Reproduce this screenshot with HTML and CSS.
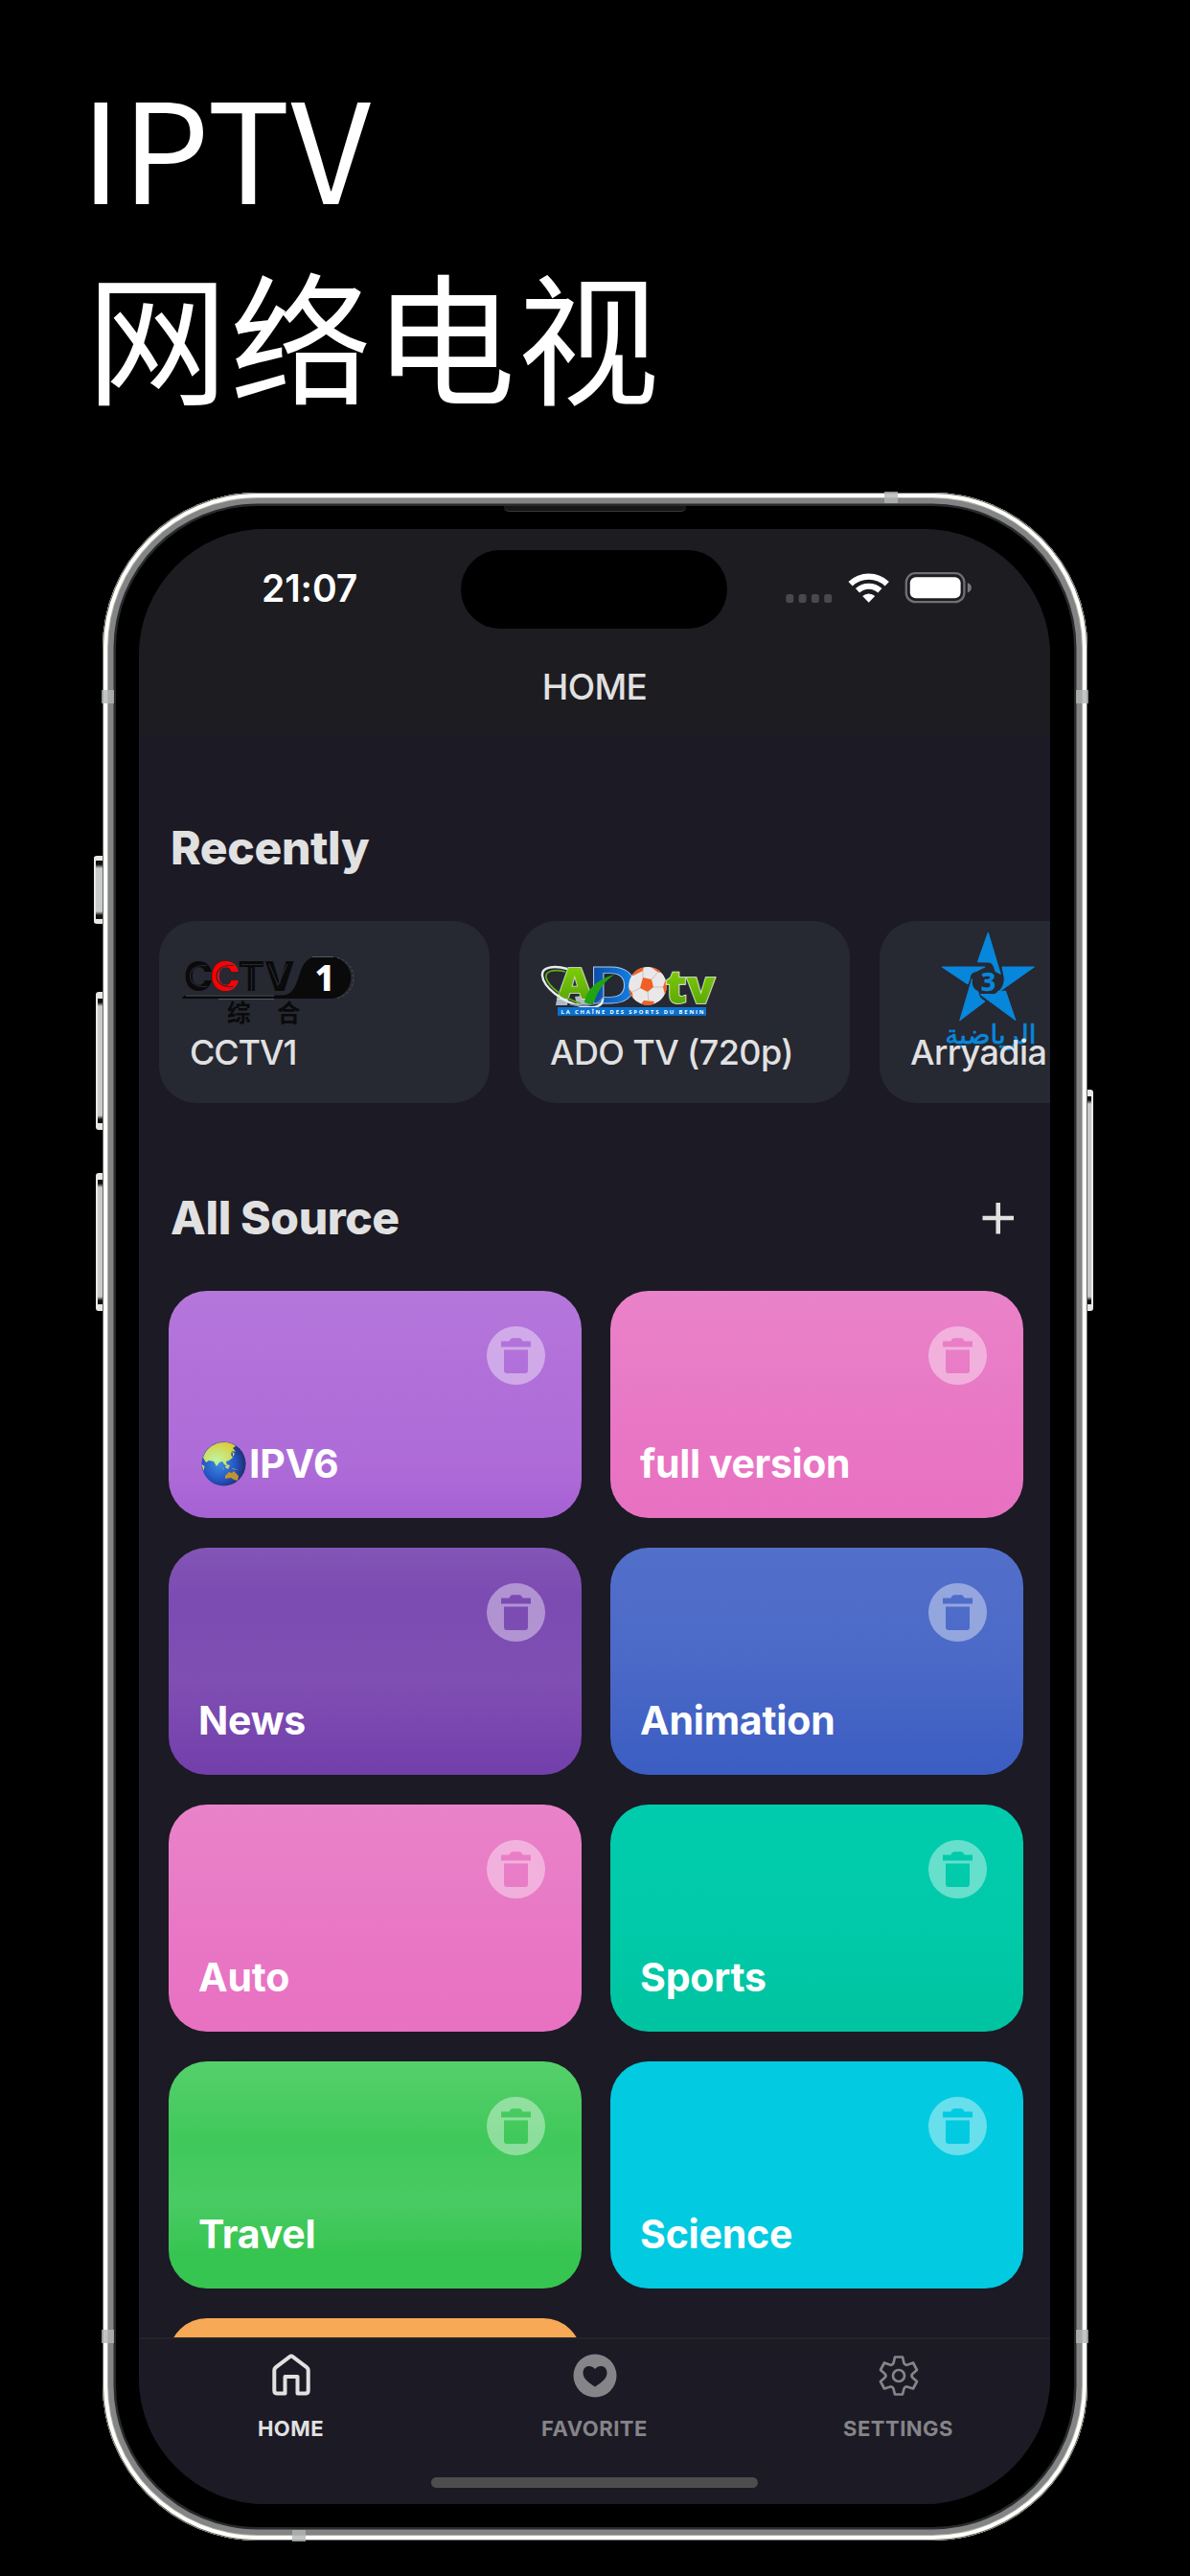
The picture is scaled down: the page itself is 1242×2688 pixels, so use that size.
FILE: index.html
```html
<!DOCTYPE html>
<html lang="zh-CN">
<head>
<meta charset="utf-8">
<title>IPTV 网络电视</title>
<link rel="stylesheet" href="styles.css">
</head>
<body>
<svg width="0" height="0" class="defs">
  <defs>
    <symbol id="trash" viewBox="0 0 61 61">
      <path fill-rule="evenodd" d="M30.5 0a30.5 30.5 0 1 0 0 61a30.5 30.5 0 1 0 0-61zM15 15.500V21.500H46V15.500H37.500C36.500 13.500 35.500 12.300 34 12.300H27C25.500 12.300 24.500 13.500 23.500 15.500zM18 24.500V46q0 3 3 3H40q3 0 3-3V24.500z"/>
    </symbol>
  </defs>
</svg>
<h1 class="headline"><span class="latin">IPTV</span><span class="cjk">网络电视</span></h1>
<div class="phone">
  <i class="btn b1"></i><i class="btn b2"></i><i class="btn b3"></i><i class="btn b4"></i>
  <i class="band a1"></i><i class="band a2"></i><i class="band a3"></i><i class="band a4"></i><i class="band a5"></i><i class="band a6"></i>
  <i class="earpiece"></i>
  <div class="screen">
    <i class="island"></i>
    <header class="top">
      <div class="status">
        <span class="time">21:07</span>
        <svg class="indicators" width="196" height="34" viewBox="820 596 196 34">
          <g fill="#49484c"><rect x="820.300" y="620" width="8" height="9" rx="2.500"/><rect x="833.600" y="620" width="8" height="9" rx="2.500"/><rect x="846.900" y="620" width="8" height="9" rx="2.500"/><rect x="860.200" y="620" width="8" height="9" rx="2.500"/></g>
          <g fill="none" stroke="#fff"><path stroke-width="6.200" d="M887.600 609.300a27.500 27.500 0 0 1 38.200 0"/><path stroke-width="6" d="M895 616.300a17 17 0 0 1 23.400 0"/></g>
          <path fill="#fff" d="M906.700 628.700l-6.500-6.700a9.500 9.500 0 0 1 13 0z"/>
          <rect x="945.800" y="598.200" width="60.600" height="30" rx="9.500" fill="none" stroke="#706f73" stroke-width="2.300"/>
          <rect x="949.800" y="602.200" width="52.800" height="22" rx="6" fill="#fff"/>
          <path fill="#78777b" d="M1009.800 608q4 1.500 4 5.200t-4 5.200z"/>
        </svg>
      </div>
      <div class="nav-title">HOME</div>
    </header>
    <main class="content">
      <h2 class="section first">Recently</h2>
      <div class="recent">
        <article class="channel">
          <svg class="logo" viewBox="166 961 345 113">
            <g font-family="Inter, sans-serif" font-weight="800" fill="#0a0a0b">
              <text x="192" y="1033.500" font-size="42" textLength="30" lengthAdjust="spacingAndGlyphs">C</text>
              <text x="219.500" y="1033.500" font-size="42" fill="#f00" textLength="30" lengthAdjust="spacingAndGlyphs">C</text>
              <text x="248.500" y="1033.500" font-size="42" textLength="59" lengthAdjust="spacingAndGlyphs">TV</text>
            </g>
            <g fill="none" stroke="#262832" stroke-width="1.200">
              <path d="M216 1007.500h-4c-18 0-18 22 0 22h4M243.500 1007.500h-4c-18 0-18 22 0 22h4M252 1006.500h22M262.500 1010v24M281 1006l9 22 10-22"/>
            </g>
            <path fill="#0a0a0b" d="M190 1042q1-3.500 5-3.500h100c12 0 15-14 19-26 4-10 9-14 17-14h16.500a22 22 0 0 1 0 43.500z"/>
            <path d="M194 1039h92M228 1042.500h58M326 998.500h22" fill="none" stroke="#555861" stroke-width="1"/>
            <path d="M352 999.500a21.500 21.500 0 0 1 0 42" fill="none" stroke="#555861" stroke-width=".8" stroke-dasharray="3 2"/>
            <text x="328.500" y="1033.800" font-family="Noto Sans, sans-serif" font-weight="800" font-size="38" fill="#fff" textLength="21" lengthAdjust="spacingAndGlyphs">1</text>
            <g font-family="Noto Sans CJK SC, sans-serif" font-weight="700" font-size="24.500" fill="#0a0a0b"><text x="237" y="1066">综</text><text x="289" y="1066">合</text></g>
          </svg>
          <span class="name n1">CCTV1</span>
        </article>
        <article class="channel">
          <svg class="logo" viewBox="542 961 345 113">
            <defs>
              <linearGradient id="lime" x1="0" y1="0" x2="0" y2="1"><stop offset="0" stop-color="#8bd90b"/><stop offset="1" stop-color="#4f9c05"/></linearGradient>
              <linearGradient id="blue" x1="0" y1="0" x2="1" y2="0"><stop offset="0" stop-color="#0b48a0"/><stop offset="1" stop-color="#1286ee"/></linearGradient>
              <clipPath id="ball"><circle cx="676" cy="1028.800" r="20"/></clipPath>
            </defs>
            <text x="615" y="1046.500" font-family="Inter, sans-serif" font-weight="700" font-size="52" fill="url(#blue)" stroke="#9fc6ee" stroke-width=".8" textLength="50" lengthAdjust="spacingAndGlyphs">D</text>
            <path d="M580 1049c1-8 3-11 6-15l8 5-2 10zM600 1040l22-3-6 12-14-1z" fill="#aeb9c6"/>
            <text x="581" y="1042" font-family="Inter, sans-serif" font-weight="900" font-size="44" fill="url(#lime)" stroke="#dfe8dd" stroke-width="1.600" paint-order="stroke" textLength="38" lengthAdjust="spacingAndGlyphs">A</text>
            <path d="M592 1011c-14-4-27-2-26 7 1 12 21 28 41 32 14 3 23 0 22-9" fill="none" stroke="#e7edf2" stroke-width="2.400"/>
            <path d="M590 1014c-12-3-21-1-20 6 2 9 18 22 36 27" fill="none" stroke="#63ad12" stroke-width="1.800"/>
            <path d="M595 1048c14 3 30 1 34-7" fill="none" stroke="#7186a0" stroke-width="1.300"/>
            <path d="M610 1046c2-10 8-22 31-29-10 7-17 16-21 29l-5 2z" fill="#22a312"/>
            <g clip-path="url(#ball)"><circle cx="676" cy="1028.800" r="20" fill="#e9e7e8"/>
              <path d="M671 1020l9 2 2 8-6 5-8-4zM664 1008l8 0-1 5-10 5-5-2zM678 1008l10 1 5 7-7-2zM695 1021l4 12-5 5-2-8zM655 1030l5 6 1 8-8-6zM672 1044l11 1-3 6-13-1z" fill="#f06024"/>
              <path d="M671 1020l0-8M680 1022l7-8M682 1030l10 0M676 1035l1 10M668 1031l-8 4" fill="none" stroke="#bab9bd" stroke-width=".8"/>
            </g>
            <text x="694.500" y="1047" font-family="Open Sans, sans-serif" font-weight="800" font-size="47" fill="url(#lime)" stroke="#e8f4dd" stroke-width="1.600" paint-order="stroke" textLength="52" lengthAdjust="spacingAndGlyphs">tv</text>
            <rect x="582" y="1051" width="155" height="8.800" fill="#0b72cf"/>
            <text x="585.500" y="1057.800" font-family="Open Sans, sans-serif" font-weight="700" font-size="5.800" fill="#fff" textLength="149">LA CHAÎNE DES SPORTS DU BENIN</text>
          </svg>
          <span class="name n2">ADO TV (720p)</span>
        </article>
        <article class="channel">
          <svg class="logo" viewBox="918 961 345 113">
            <g fill="#0787dc" stroke="#0787dc" stroke-linejoin="round">
              <path d="M1031.300 973l13 43.500-5.500-3q-2-10-7.500-9.500l-11-.2zM1046 1009h33.500l-37.500 26.500q7-7 6.200-15.500zM1049.500 1034l10.500 30.700L1023 1037.500h11q6 1 8-3.500l3.500.5zM1014.500 1021.500q-2 9 6.500 13.500 0 6 7 10l-26.300 20zM983 1009h45l-9 4.500q-7 1-7 8.500l-2 5z"/>
              <text x="1031.500" y="1034" text-anchor="middle" stroke-width=".4" font-family="Noto Sans, sans-serif" font-weight="700" font-size="27">3</text>
              <text x="1034" y="1089" text-anchor="middle" direction="rtl" stroke-width=".7" font-family="DejaVu Sans, sans-serif" font-weight="400" font-size="28">الرياضية</text>
            </g>
          </svg>
          <span class="name n3">Arryadia</span>
        </article>
      </div>
      <div class="section-row">
        <h2 class="section all">All Source</h2>
        <svg class="plus" width="34" height="34" viewBox="0 0 34 34"><path d="M.5 17H33M16.750 1V33.500" fill="none" stroke="#e1e1e1" stroke-width="4.600"/></svg>
      </div>
      <div class="grid">
        <div class="tile orchid"><svg class="bin"><use href="#trash"/></svg><span class="label"><svg class="globe" width="47" height="47" viewBox="0 0 47 47" role="img" aria-label="🌏"><defs><radialGradient id="sea" cx=".4" cy=".5" r=".62"><stop offset="0" stop-color="#3f8ce0"/><stop offset=".6" stop-color="#2456c4"/><stop offset="1" stop-color="#1d2b66"/></radialGradient><radialGradient id="land" cx=".4" cy=".6" r=".7"><stop offset="0" stop-color="#bdf5a4"/><stop offset="1" stop-color="#dfc82e"/></radialGradient></defs><circle cx="23.500" cy="23.500" r="23" fill="url(#sea)"/><path fill="url(#land)" d="M2 17C5 7 14 1 24 1c5 0 10 2 12 4l-3 2 3 4-4-1-1 4 2 3-4 3-3 1 1 5-3-2-2-3-3 1-3 4-3-5-5-1-3 2zM0.500 24l3 2-1 5zM22 26l2 4-1-1zM26 24l4 1-2 4-3-2zM32 28l7 2-6-1zM32 10l3 3-2 3 0-3z"/><path fill="#bf9430" d="M25 36l4-4 3 1 2-2 5 5-1 5-4-1-3-2-6 1z"/></svg><span class="ipv">IPV6</span></span></div>
        <div class="tile pink"><svg class="bin"><use href="#trash"/></svg><span class="label full">full version</span></div>
        <div class="tile violet"><svg class="bin"><use href="#trash"/></svg><span class="label">News</span></div>
        <div class="tile indigo"><svg class="bin"><use href="#trash"/></svg><span class="label">Animation</span></div>
        <div class="tile pink"><svg class="bin"><use href="#trash"/></svg><span class="label">Auto</span></div>
        <div class="tile teal"><svg class="bin"><use href="#trash"/></svg><span class="label">Sports</span></div>
        <div class="tile green"><svg class="bin"><use href="#trash"/></svg><span class="label">Travel</span></div>
        <div class="tile cyan"><svg class="bin"><use href="#trash"/></svg><span class="label">Science</span></div>
        <div class="tile orange"></div>
      </div>
    </main>
    <nav class="tabs">
      <div class="tab active">
        <svg width="48" height="48" viewBox="0 0 48 48"><path d="M6.300 18.500Q6.300 16.500 8 15.100L22.500 4.100q1.500-1.100 3 0L40 15.100q1.700 1.400 1.700 3.400V39.500q0 3-3 3H30.500V25H17.500V42.500H9.300q-3 0-3-3z" fill="none" stroke="#e1e1e1" stroke-width="4" stroke-linejoin="round"/></svg>
        <span>HOME</span>
      </div>
      <div class="tab">
        <svg width="48" height="48" viewBox="0 0 48 48"><path fill="#858489" fill-rule="evenodd" d="M24 1.500a22.500 22.500 0 1 0 0 45a22.500 22.500 0 1 0 0-45zM24 17C20 12 11.500 13 11.500 21C11.500 28 19 32 24 35.500C29 32 36.500 28 36.500 21C36.500 13 28 12 24 17z"/></svg>
        <span>FAVORITE</span>
      </div>
      <div class="tab">
        <svg width="48" height="48" viewBox="0 0 48 48"><g fill="none" stroke="#858489" stroke-width="2.700" stroke-linejoin="round"><path d="M20 4.500H28L29.500 11Q31 13.500 33.500 12.500L39 10.500L43 18L38.500 22Q36.500 24 38.500 26L43 30L39 37.500L33.500 35.700Q31 34.800 29.500 37.500L28 43.500H20L18.500 37.500Q17 34.800 14.500 35.700L9 37.500L5 30L9.500 26Q11.500 24 9.500 22L5 18L9 10.500L14.500 12.500Q17 13.500 18.500 11Z"/><circle cx="24" cy="24" r="6"/></g></svg>
        <span>SETTINGS</span>
      </div>
      <i class="indicator"></i>
    </nav>
  </div>
</div>
</body>
</html>
```
FILE: styles.css
```css
* { box-sizing: border-box; }
body { margin: 0; width: 1242px; height: 2688px; overflow: hidden; background: #000; font-family: Inter, "Noto Sans CJK SC", sans-serif; color: #e1e1e1; }
.defs { position: absolute; }
.headline { margin: 0; height: 514px; padding: 51px 0 0 84px; color: #fff; font: 400 145px/198px "Noto Sans CJK SC", sans-serif; white-space: nowrap; }
.headline span { display: block; }
.latin { letter-spacing: .8px; }
.headline .cjk { font-size: 148px; letter-spacing: 2px; padding-left: 6px; margin-top: -1px; }
.phone { position: relative; width: 1028px; height: 2137px; margin-left: 107px; padding: 38px; border-radius: 162px; background: #000; box-shadow: inset 0 0 0 1px #686864, inset 0 0 0 5px #fffffb, inset 0 0 0 6px #b3b0a6, inset 0 0 0 11.500px #828486, inset 0 0 0 14px #292b2b; }
.btn { position: absolute; border: 2px solid #e8e8e6; border-width: 7px 0 7px 2px; background: linear-gradient(#111 0 4px, #c9cbcb 8px calc(100% - 8px), #111 calc(100% - 4px)); border-radius: 3px 0 0 3px; }
.b1 { left: -9px; top: 379px; width: 9px; height: 71px; border-width: 5px 0 5px 2px; }
.b2 { left: -7px; top: 521px; width: 7px; height: 144px; }
.b3 { left: -7px; top: 710px; width: 7px; height: 144px; }
.b4 { right: -6px; top: 623px; width: 6px; height: 231px; border-width: 7px 2px 7px 0; border-radius: 0 3px 3px 0; }
.band { position: absolute; width: 13px; height: 14px; background: #b4b5b6cc; }
.a1 { left: -1px; top: 206px; }
.a2 { right: -1px; top: 206px; }
.a3 { left: 816px; top: -1px; width: 14px; height: 12px; }
.a4 { left: -1px; top: 1917px; }
.a5 { right: -1px; top: 1917px; }
.a6 { left: 198px; bottom: -1px; width: 14px; height: 12px; }
.earpiece { position: absolute; left: 419px; top: 14px; width: 190px; height: 6px; background: #171717; border-bottom: 1px solid #3a3a3a; border-radius: 0 0 5px 5px; }
.screen { position: relative; width: 951px; height: 2061px; border-radius: 132px; overflow: hidden; background: #1c1a24; display: flex; flex-direction: column; }
.island { position: absolute; left: 336px; top: 22px; width: 278px; height: 82px; border-radius: 41px; background: #000; }
.top { height: 215px; background: #1d1c20; padding-top: 37px; flex: none; }
.status { display: flex; justify-content: space-between; align-items: center; height: 48px; padding: 0 80px 0 128px; }
.time { font-size: 39px; font-weight: 600; color: #fff; letter-spacing: -.1px; }
.nav-title { margin-top: 57px; line-height: 46px; height: 46px; text-align: center; font-size: 37px; font-weight: 500; letter-spacing: -.6px; }
.content { height: 1672px; overflow: hidden; flex: none; }
.section { margin: 0; font-size: 48px; line-height: 60px; font-weight: 800; letter-spacing: -.4px; }
.first { padding: 88px 0 0 33px; height: 194px; }
.recent { display: flex; gap: 31px; padding-left: 21px; }
.channel { flex: none; width: 345px; height: 190px; border-radius: 38px; background: #262832; }
.logo { display: block; width: 345px; height: 113px; overflow: visible; }
.name { display: block; line-height: 48px; padding-left: 32px; font-size: 36px; font-weight: 500; position: relative; letter-spacing: -.6px; }
.n1 { letter-spacing: -1.1px; }
.section-row { display: flex; justify-content: space-between; align-items: center; height: 60px; margin-top: 90px; padding: 0 37px 0 33px; }
.grid { display: grid; grid-template-columns: 431px 431px; column-gap: 30px; row-gap: 31px; padding: 46px 0 0 31px; }
.tile { height: 237px; border-radius: 40px; display: flex; flex-direction: column; justify-content: space-between; padding: 37px 38px 32px 31px; }
.bin { width: 61px; height: 61px; align-self: flex-end; fill: #ffffff66; }
.label { display: flex; align-items: center; height: 50px; font-size: 41px; line-height: 50px; font-weight: 700; letter-spacing: -.2px; color: #fff; white-space: pre; }
.full { letter-spacing: -.35px; }
.globe { margin: 0 3px 0 3px; }
.orchid { background: linear-gradient(#b577dc, #b06fd9 40%, #ae6cd8 75%, #a661d3); }
.pink { background: linear-gradient(#ea82c9, #e87ac5 45%, #e977c6 55%, #e871c1); }
.violet { background: linear-gradient(#8355b6, #7c4bb2 22%, #804fb3 58%, #723fab); }
.indigo { background: linear-gradient(#526fca, #4b69c7 50%, #3b5dc2); }
.teal { background: linear-gradient(#00ccad, #00c9a8 60%, #00c3a0); }
.green { background: linear-gradient(#55d06b, #40c85a 35%, #49cb63 62%, #36c550 85%); }
.cyan { background: #02cae1; }
.orange { background: #f8a955; }
.tabs { position: relative; height: 174px; border-top: 2px solid #242329; background: #1c1a24; display: grid; grid-template-columns: repeat(3, 317px); flex: none; }
.tab { display: flex; flex-direction: column; align-items: center; padding-top: 14px; font-size: 22px; line-height: 28px; font-weight: 700; letter-spacing: .5px; color: #858489; }
.tab span { margin-top: 17px; }
.tab.active { color: #e1e1e1; }
.indicator { position: absolute; left: 305px; top: 144px; width: 341px; height: 11px; border-radius: 6px; background: #4d4d4d; }
```
